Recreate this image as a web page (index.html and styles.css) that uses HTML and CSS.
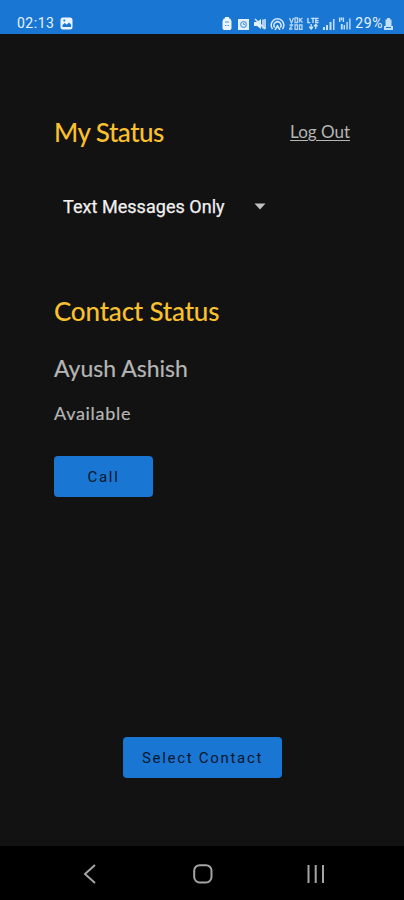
FILE: index.html
```html
<!DOCTYPE html>
<html lang="en">
<head>
<meta charset="utf-8">
<title>My Status</title>
<link rel="stylesheet" href="styles.css">
</head>
<body>
<div class="screen">
  <header class="statusbar">
    <span class="clock">02:13</span>
    <svg class="photo" width="13" height="13" viewBox="0 0 13 13"><rect x=".5" y=".5" width="12" height="12" rx="2.5" fill="#e8f4ff"/><path d="M2.500 10V8l2.300-2 2 1.800L9 5.500l2 2V10z" fill="#1976d2"/><circle cx="4.300" cy="3.500" r="1" fill="#1976d2"/></svg>
    <div class="indicators">
      <svg class="saver" width="10" height="13" viewBox="0 0 10 13"><path d="M3 0h4v1.500h1.200L9.500 4v7.500L8.300 13H1.700L.5 11.500V4l1.300-2.500H3z" fill="#eaf5ff"/><path d="M3 5h4M3 8.500h1.500M5.500 8.500H7" stroke="#4b98df" stroke-width="1.200"/></svg>
      <svg class="alarm" width="11" height="12" viewBox="0 0 11 12"><path d="M0 1h11v11H0z" fill="#e2f0fd"/><circle cx="5.500" cy="6.500" r="2.800" fill="none" stroke="#5a9ee2" stroke-width="1.200"/><path d="M5.500 5v1.500H7" fill="none" stroke="#5a9ee2"/></svg>
      <svg width="12" height="12" viewBox="0 0 12 12"><path d="M0 4h3l4-3v10L3 8H0z" fill="#e2f0fd"/><path d="M1 1l10 10M9 1.500v9M11 1v10" stroke="#d8ebfc" stroke-width="1.500"/></svg>
      <svg width="15" height="12" viewBox="0 0 15 12" fill="none" stroke="#d8ebfc" stroke-width="1.500"><path d="M2.500 11a6.300 6.300 0 1 1 10 0M4.800 9.500a3.500 3.500 0 1 1 5.400 0M7.500 7v1M5 12l2.500-4 2.500 4"/></svg>
      <svg width="14" height="13" viewBox="0 0 14 13" fill="none" stroke="#b5d6f5" stroke-width="1.300"><path d="M.5 1l2 5 2-5M6 1h2.500v4.500H6zM10.500 1v4.500M13.500 1l-2.500 2 2.500 2.500M.5 8h3L.5 12h3M6 8h2.500v4.500H6zM10.500 8H13v4.500h-2.500z"/></svg>
      <svg width="12" height="13" viewBox="0 0 13 13" fill="none" stroke="#d0e6fa" stroke-width="1.400"><path d="M1 .5v5h2.500M4.500 1h4M6.500 1v5M12.500 1h-3v4.500h3M9.500 3.300h3M4.500 7v5M2.500 10l2 2.500 2-2.500M9.500 12.500v-5M7.500 9.500l2-2 2 2"/></svg>
      <svg width="12" height="12" viewBox="0 0 12 12" fill="#c4e0f9"><path d="M0 9h2v3H0zM3 7h2v5H3zM6.500 4h2v8h-2zM10 1h1.500v11H10z"/></svg>
      <svg width="12" height="13" viewBox="0 0 13 13" fill="#c4e0f9"><path d="M0 0h1.500v5H0zM2 0h1.500v3H2zM4 0h1.500v5H4zM2 7h2v6H2zM5 8h1.500v5H5zM8 5h1.500v8H8zM11 1h1.500v12H11z"/></svg>
      <span class="percent">29%</span>
      <svg width="9" height="12" viewBox="0 0 9 12"><path d="M3 0h3v1.500h1.500V8H9v4H0V8h1.500V1.500H3z" fill="#c4e0f9"/><path d="M2 9.500h5" stroke="#1976d2"/></svg>
    </div>
  </header>
  <main class="content">
    <section class="mine">
      <div class="heading-row">
        <h1 class="title my-title">My Status</h1>
        <a class="logout">Log Out</a>
      </div>
      <div class="select">
        <span class="select-value">Text Messages Only</span>
        <svg width="12" height="7" viewBox="0 0 12 7"><path d="M.5.500h11L6 6.500z" fill="#c0c0c0"/></svg>
      </div>
    </section>
    <section class="contact">
      <h2 class="title contact-title">Contact Status</h2>
      <p class="name">Ayush Ashish</p>
      <p class="availability">Available</p>
      <button class="button call">Call</button>
    </section>
    <button class="button choose">Select Contact</button>
  </main>
  <nav class="navbar">
    <svg width="20" height="20" viewBox="0 0 20 20"><path d="M15 1L5 10l10 9"/></svg>
    <svg width="20" height="20" viewBox="0 0 20 20"><rect x="1.200" y="1.200" width="17.300" height="17.300" rx="5.500"/></svg>
    <svg width="20" height="20" viewBox="0 0 20 20"><path d="M2.500 1v18M9.700 1v18M17 1v18"/></svg>
  </nav>
</div>
</body>
</html>
```
FILE: styles.css
```css
* { box-sizing: border-box; }
body { margin: 0; background: #121212; font-family: Roboto, sans-serif; }
h1, h2, p { margin: 0; }
.screen { width: 404px; height: 900px; display: flex; flex-direction: column; background: #121212; }
.statusbar { height: 34px; padding: 13px 11px 0 17px; display: flex; align-items: center; background: #1976d2; color: #e8f4ff; }
.clock { font-size: 14px; line-height: 21px; letter-spacing: .5px; }
.photo { margin-left: 6px; }
.indicators { margin-left: auto; display: flex; align-items: center; gap: 4px; }
.saver { margin-right: 2px; }
.alarm { margin-right: 1px; }
.percent { font-size: 14px; line-height: 21px; letter-spacing: .6px; margin-right: -3px; }
.content { flex: 1; display: flex; flex-direction: column; padding: 0 54px; font-family: Lato, sans-serif; }
.heading-row { display: flex; justify-content: space-between; align-items: center; height: 40px; margin-top: 78px; }
.title { font-weight: 500; font-size: 26px; line-height: 40px; color: #fbc02d; white-space: nowrap; }
.my-title { letter-spacing: -.5px; }
.contact-title { letter-spacing: -.2px; }
.logout { font-size: 17px; line-height: 24px; color: #b5b5b5; text-decoration: underline; text-underline-offset: 2px; }
.select { display: flex; align-items: center; height: 40px; margin-top: 34px; padding-left: 9px; font-family: Roboto, sans-serif; color: #f0f0f0; }
.select-value { width: 191px; font-size: 18px; letter-spacing: .04px; -webkit-text-stroke: .25px; white-space: nowrap; }
.contact { margin-top: 65px; }
.name { margin-top: 21px; font-size: 23px; line-height: 32px; color: #b5b5b5; -webkit-text-stroke: .2px; }
.availability { margin-top: 16px; font-size: 18px; line-height: 26px; letter-spacing: .7px; color: #b5b5b5; -webkit-text-stroke: .2px; }
.button { display: block; border: 0; padding: 2px 0 0; border-radius: 4px; background: #1976d2; color: #07172c; font: 400 15px/39px Roboto, sans-serif; letter-spacing: 1.700px; height: 41px; }
.call { width: 99px; margin-top: 30px; }
.choose { width: 159px; margin: auto 0 68px 69px; }
.navbar { height: 54px; background: #000; display: flex; justify-content: space-between; align-items: center; padding: 2px 78px 0 80px; }
.navbar svg { fill: none; stroke: #a5a5a5; stroke-width: 2; }
```
